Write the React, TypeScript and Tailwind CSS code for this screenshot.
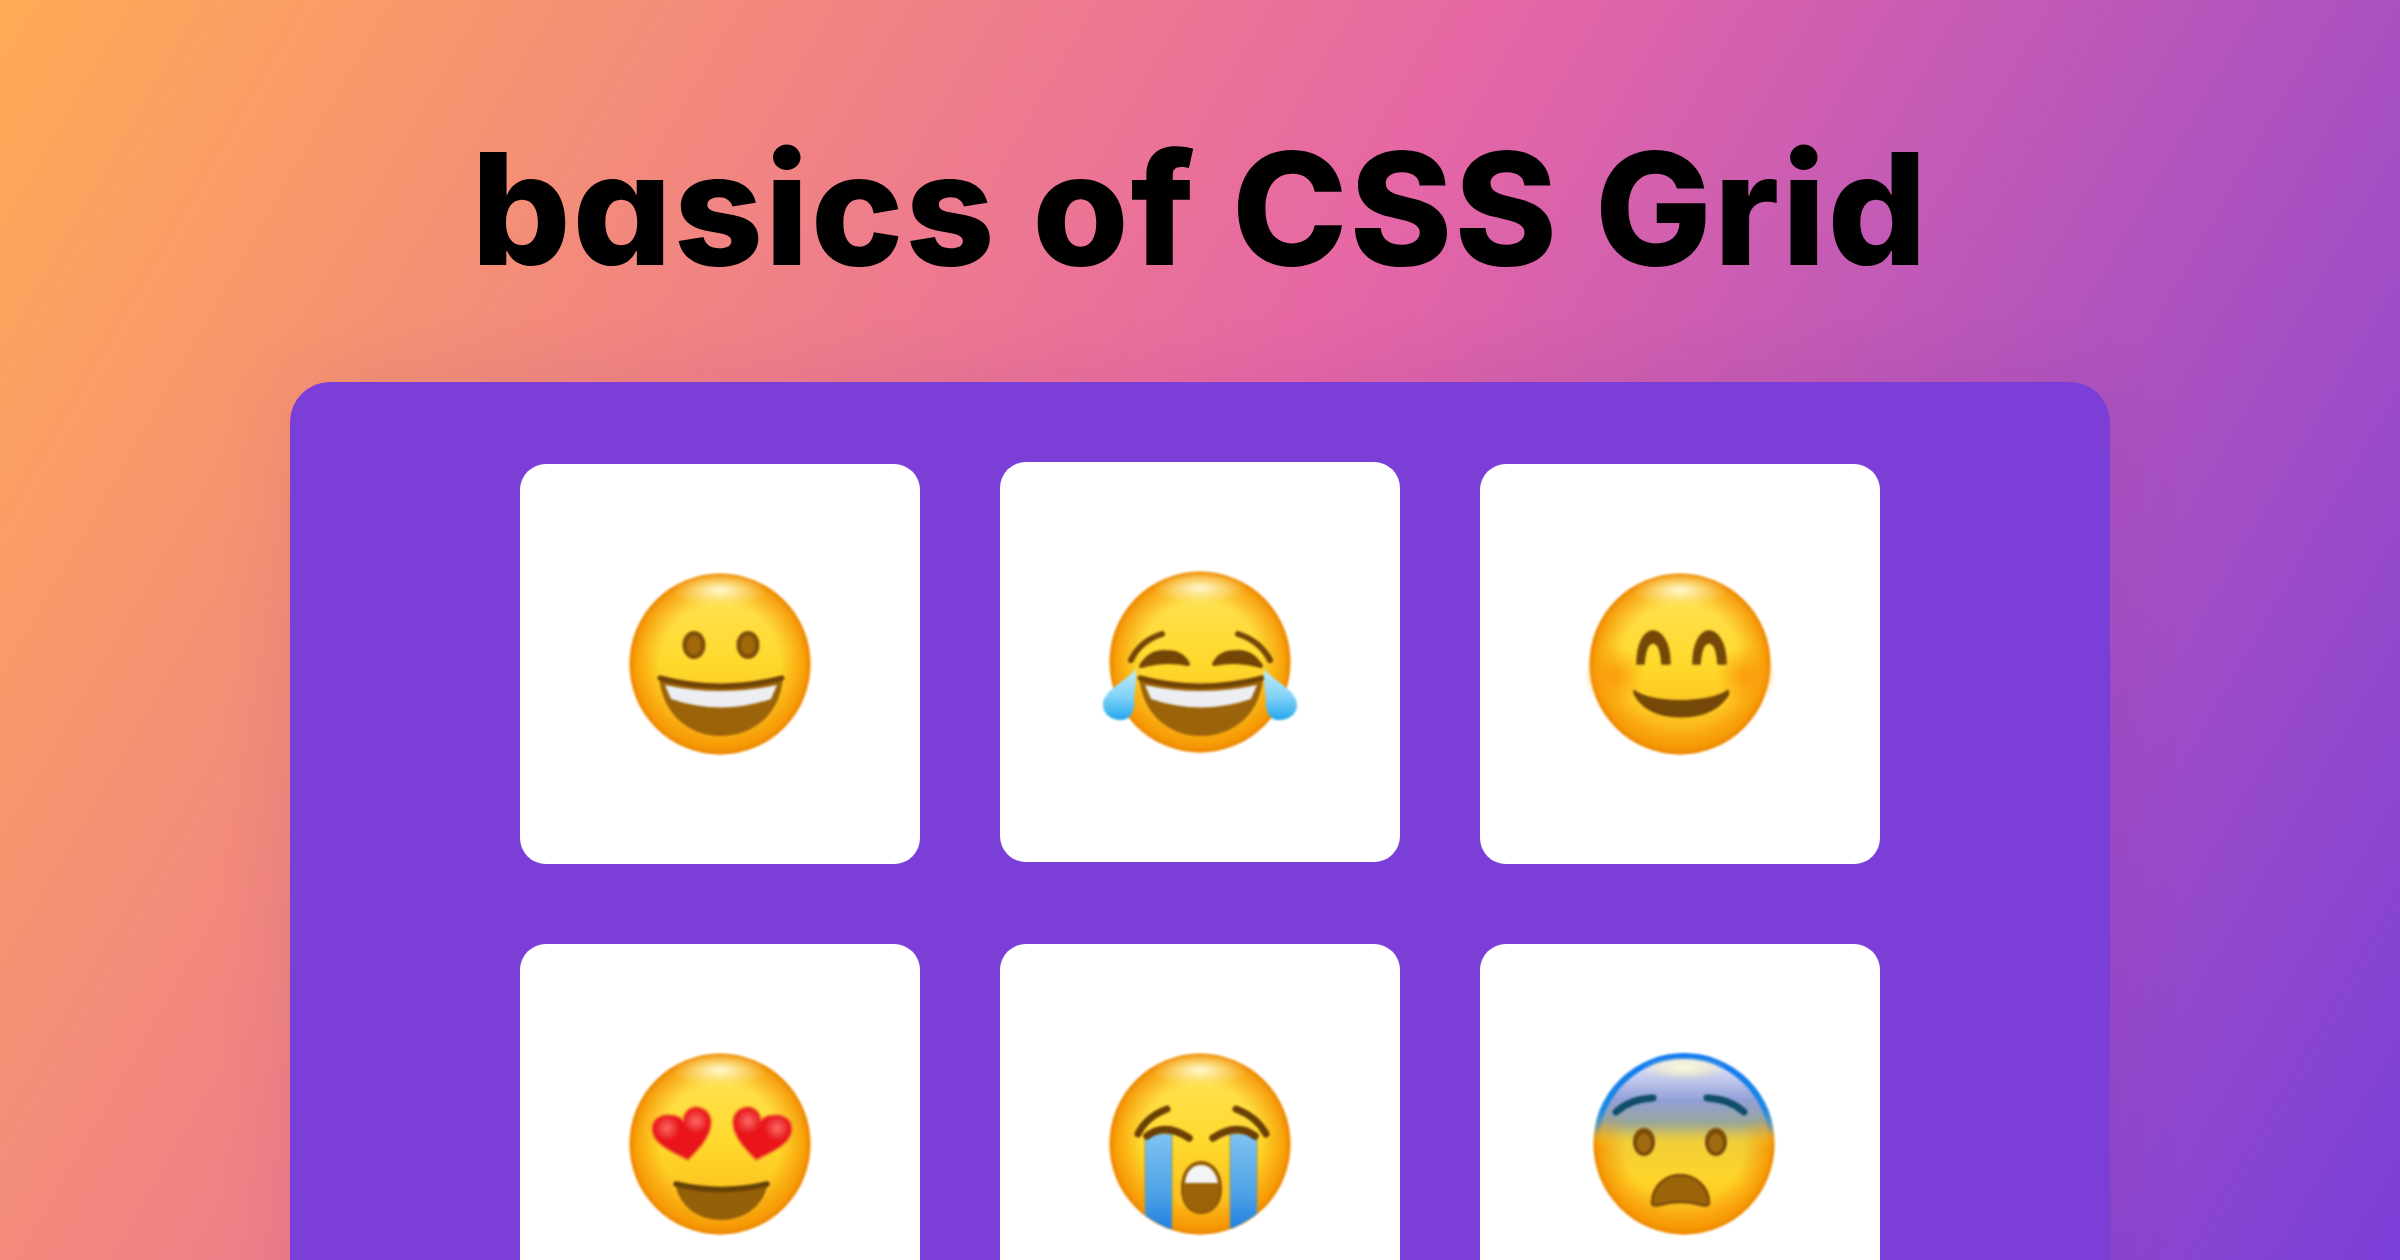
const Defs = () => (
  <svg width="0" height="0" className="absolute">
    <defs>
      <linearGradient id="face" x1="0" y1="0" x2="0" y2="1">
        <stop offset="0" stopColor="#ffe45c" />
        <stop offset="0.5" stopColor="#ffd92c" />
        <stop offset="1" stopColor="#fbb016" />
      </linearGradient>
      <radialGradient id="rim" cx="0.5" cy="0.5" r="0.5">
        <stop offset="0.66" stopColor="#f59300" stopOpacity="0" />
        <stop offset="0.93" stopColor="#f59300" stopOpacity="0.8" />
        <stop offset="1" stopColor="#ec8400" />
      </radialGradient>
      <radialGradient id="shine" cx="0.5" cy="0.5" r="0.5">
        <stop offset="0" stopColor="#fffbe0" stopOpacity="0.95" />
        <stop offset="1" stopColor="#fff3a0" stopOpacity="0" />
      </radialGradient>
      <radialGradient id="blush" cx="0.5" cy="0.5" r="0.5">
        <stop offset="0" stopColor="#fb9a0c" />
        <stop offset="1" stopColor="#fb9a0c" stopOpacity="0" />
      </radialGradient>
      <radialGradient id="heartShine" cx="0.5" cy="0.5" r="0.5">
        <stop offset="0" stopColor="#ff7f78" stopOpacity="0.8" />
        <stop offset="1" stopColor="#ff7f78" stopOpacity="0" />
      </radialGradient>
      <linearGradient id="tearDrop" x1="0" y1="0" x2="0" y2="1">
        <stop offset="0" stopColor="#c4ecfb" />
        <stop offset="0.55" stopColor="#7fd2f7" />
        <stop offset="1" stopColor="#22a5ee" />
      </linearGradient>
      <linearGradient id="tearStream" x1="0" y1="0" x2="0" y2="1">
        <stop offset="0" stopColor="#7fc3f2" />
        <stop offset="0.55" stopColor="#4da2e6" />
        <stop offset="1" stopColor="#0a6fe0" />
      </linearGradient>
      <linearGradient id="fearFace" x1="0" y1="0" x2="0" y2="1">
        <stop offset="0.05" stopColor="#e6e8fa" />
        <stop offset="0.26" stopColor="#919fd8" />
        <stop offset="0.38" stopColor="#98a79a" />
        <stop offset="0.48" stopColor="#f0cd3a" />
        <stop offset="0.7" stopColor="#ffd42a" />
        <stop offset="1" stopColor="#fbab12" />
      </linearGradient>
      <linearGradient id="fearRim" x1="0" y1="0" x2="0" y2="1">
        <stop offset="0" stopColor="#0f78f2" />
        <stop offset="0.3" stopColor="#1c8ae0" />
        <stop offset="0.46" stopColor="#1c8ae0" stopOpacity="0" />
      </linearGradient>
      <linearGradient id="fearFade" x1="0" y1="0" x2="0" y2="1">
        <stop offset="0.36" stopColor="#000" />
        <stop offset="0.52" stopColor="#fff" />
      </linearGradient>
      <mask id="fearLower" maskUnits="userSpaceOnUse" x="0" y="0" width="200" height="200">
        <rect x="0" y="0" width="200" height="200" fill="url(#fearFade)" />
      </mask>
      <clipPath id="faceClip">
        <circle cx="100" cy="100" r="90" />
      </clipPath>
    </defs>
  </svg>
);

const Emoji = ({ children }: { children: React.ReactNode }) => (
  <svg viewBox="-10 -10 220 220" className="w-[220px] h-[220px] overflow-visible blur-[1px]">
    {children}
  </svg>
);

const Face = () => (
  <>
    <circle cx="100" cy="100" r="90.5" fill="url(#face)" />
    <circle cx="100" cy="100" r="90.5" fill="url(#rim)" />
    <ellipse cx="100" cy="26" rx="48" ry="17" fill="url(#shine)" />
  </>
);

const GrinMouth = ({ y = 0 }: { y?: number }) => (
  <g transform={`translate(0 ${y})`}>
    <path d="M39 113 Q100 130 163 113 C161 148 135 172 101 172 C67 172 42 148 39 113Z" fill="#9c640a" />
    <path d="M45 121 Q100 133 157 121 L151 135 Q101 152 51 135Z" fill="#eceef2" />
    <path d="M40 114 Q100 130 162 114" fill="none" stroke="#6f4306" strokeWidth="5" strokeLinecap="round" />
  </g>
);

const Grinning = () => (
  <Emoji>
    <Face />
    <ellipse cx="74" cy="81" rx="11.5" ry="14" fill="#80500a" />
    <ellipse cx="74" cy="81" rx="7" ry="9.5" fill="#a2690a" />
    <ellipse cx="128" cy="81" rx="11.5" ry="14" fill="#80500a" />
    <ellipse cx="128" cy="81" rx="7" ry="9.5" fill="#a2690a" />
    <GrinMouth />
  </Emoji>
);

const Joy = () => (
  <Emoji>
    <Face />
    <path d="M31 98 Q40 79 62 72" fill="none" stroke="#744606" strokeWidth="6" strokeLinecap="round" />
    <path d="M138 72 Q160 79 170 98" fill="none" stroke="#744606" strokeWidth="6" strokeLinecap="round" />
    <path d="M41 104 Q50 89 66 90 Q82 90 88 102 Q66 97 41 104Z" fill="#744606" stroke="#744606" strokeWidth="4" strokeLinejoin="round" />
    <path d="M161 104 Q152 89 136 90 Q120 90 114 102 Q136 97 161 104Z" fill="#744606" stroke="#744606" strokeWidth="4" strokeLinejoin="round" />
    <GrinMouth y={2} />
    <path d="M36 107 C25 120 3 128 3 143 C3 153 13 159 23 158 C30 157 34 150 34 142 C34 130 37 118 36 107Z" fill="url(#tearDrop)" />
    <path d="M164 107 C175 120 197 128 197 143 C197 153 187 159 177 158 C170 157 166 150 166 142 C166 130 163 118 164 107Z" fill="url(#tearDrop)" />
  </Emoji>
);

const Smiling = () => (
  <Emoji>
    <Face />
    <circle cx="34" cy="112" r="30" fill="url(#blush)" />
    <circle cx="166" cy="112" r="30" fill="url(#blush)" />
    <path d="M57 100 C57 78 65 67 73 67 C81 67 90 78 90 100 L82 100 C81 86 78 79 73 79 C68 79 65 86 64 100Z" fill="#744806" stroke="#744806" strokeWidth="1.5" strokeLinejoin="round" />
    <path d="M113 100 C113 78 121 67 129 67 C137 67 146 78 146 100 L138 100 C137 86 134 79 129 79 C124 79 121 86 120 100Z" fill="#744806" stroke="#744806" strokeWidth="1.5" strokeLinejoin="round" />
    <path d="M54 126 C70 140 130 140 148 126 L149 130 C140 146 122 153 101 153 C80 153 62 146 54 130Z" fill="#744806" stroke="#744806" strokeWidth="1" strokeLinejoin="round" />
  </Emoji>
);

const Heart = () => (
  <>
    <path
      d="M68 116 C52 108 32 100 32 85 C32 74 42 70 50 71 C55 71 60 73 63 76 C64 68 70 62 77 63 C86 64 92 71 91 80 C90 94 78 106 68 116Z"
      fill="#e9151b"
      stroke="#ef7f28"
      strokeWidth="2"
    />
    <circle cx="47" cy="84" r="13" fill="url(#heartShine)" />
    <circle cx="76" cy="77" r="13" fill="url(#heartShine)" />
  </>
);

const HeartEyes = () => (
  <Emoji>
    <Face />
    <Heart />
    <g transform="translate(204 0) scale(-1 1)">
      <Heart />
    </g>
    <path d="M55 139 Q101 150 148 139 C144 162 124 176 101 176 C78 176 59 162 55 139Z" fill="#946008" />
    <path d="M56 140 Q101 151 147 140" fill="none" stroke="#664006" strokeWidth="5.5" strokeLinecap="round" />
  </Emoji>
);

const Crying = () => (
  <Emoji>
    <Face />
    <g clipPath="url(#faceClip)">
      <rect x="45" y="90" width="27" height="110" fill="url(#tearStream)" stroke="#8f9a60" strokeWidth="1" />
      <rect x="130" y="90" width="27" height="110" fill="url(#tearStream)" stroke="#8f9a60" strokeWidth="1" />
    </g>
    <path d="M38 90 Q46 73 67 65" fill="none" stroke="#6a4006" strokeWidth="7" strokeLinecap="round" />
    <path d="M136 65 Q157 73 166 90" fill="none" stroke="#6a4006" strokeWidth="7" strokeLinecap="round" />
    <path d="M47 92 Q65 78 89 94" fill="none" stroke="#6a4006" strokeWidth="7.5" strokeLinecap="round" />
    <path d="M113 94 Q137 78 155 92" fill="none" stroke="#6a4006" strokeWidth="7.5" strokeLinecap="round" />
    <path d="M82 145 C82 128 90 118 101 118 C112 118 121 128 121 145 C121 160 112 169 101 169 C90 169 82 160 82 145Z" fill="#9c640a" stroke="#8a5508" strokeWidth="2" />
    <path d="M85 139 C86 128 92 121 101 121 C110 121 116 128 118 139Z" fill="#f4f4f6" />
  </Emoji>
);

const Fearful = () => (
  <Emoji>
    <g transform="translate(4 0)">
      <circle cx="100" cy="100" r="90.5" fill="url(#fearFace)" />
      <circle cx="100" cy="100" r="90.5" fill="url(#rim)" mask="url(#fearLower)" />
      <circle cx="100" cy="100" r="88" fill="none" stroke="url(#fearRim)" strokeWidth="6" />
      <ellipse cx="100" cy="24" rx="42" ry="12" fill="url(#shine)" />
      <path d="M32 68 Q46 55 69 54" fill="none" stroke="#0f4d68" strokeWidth="7" strokeLinecap="round" />
      <path d="M123 54 Q146 55 160 68" fill="none" stroke="#0f4d68" strokeWidth="7" strokeLinecap="round" />
      <ellipse cx="60" cy="98" rx="11" ry="14" fill="#7a4c08" />
      <ellipse cx="60" cy="99" rx="7" ry="9.5" fill="#a06a12" />
      <ellipse cx="132" cy="98" rx="11" ry="14" fill="#7a4c08" />
      <ellipse cx="132" cy="99" rx="7" ry="9.5" fill="#a06a12" />
      <path d="M68 158 C69 142 81 131 96 131 C111 131 124 142 125 158 C125 162 121 162 118 161 Q96 155 75 161 C71 162 68 162 68 158Z" fill="#9c640a" stroke="#7a4c08" strokeWidth="2.5" />
    </g>
  </Emoji>
);

const cards = [
  { id: "grin", icon: <Grinning />, raised: false },
  { id: "joy", icon: <Joy />, raised: true },
  { id: "smile", icon: <Smiling />, raised: false },
  { id: "hearts", icon: <HeartEyes />, raised: false },
  { id: "cry", icon: <Crying />, raised: false },
  { id: "fear", icon: <Fearful />, raised: false },
];

export default function App() {
  return (
    <div className="h-[1260px] overflow-hidden flex flex-col items-center bg-[linear-gradient(120deg,#ffab55_0%,#e667a5_48%,#7a3fd8_100%)]">
      <Defs />
      <h1 className="mt-[116px] h-[186px] text-[156px] leading-[186px] font-extrabold text-black tracking-[1.7px] whitespace-nowrap font-['Inter',sans-serif] [font-feature-settings:'cv11']">
        basics of CSS Grid
      </h1>
      <div className="mt-[80px] w-[1820px] shrink-0 rounded-t-[40px] bg-[#7b3fd8] px-[230px] pt-[82px] pb-[80px] shadow-[0_0_80px_rgba(60,20,120,0.08)]">
        <div className="grid grid-cols-3 gap-[80px]">
          {cards.map((card) => (
            <div
              key={card.id}
              className={
                card.raised
                  ? "h-[400px] rounded-[26px] bg-white flex items-center justify-center -translate-y-0.5"
                  : "h-[400px] rounded-[26px] bg-white flex items-center justify-center"
              }
            >
              {card.icon}
            </div>
          ))}
        </div>
      </div>
    </div>
  );
}
